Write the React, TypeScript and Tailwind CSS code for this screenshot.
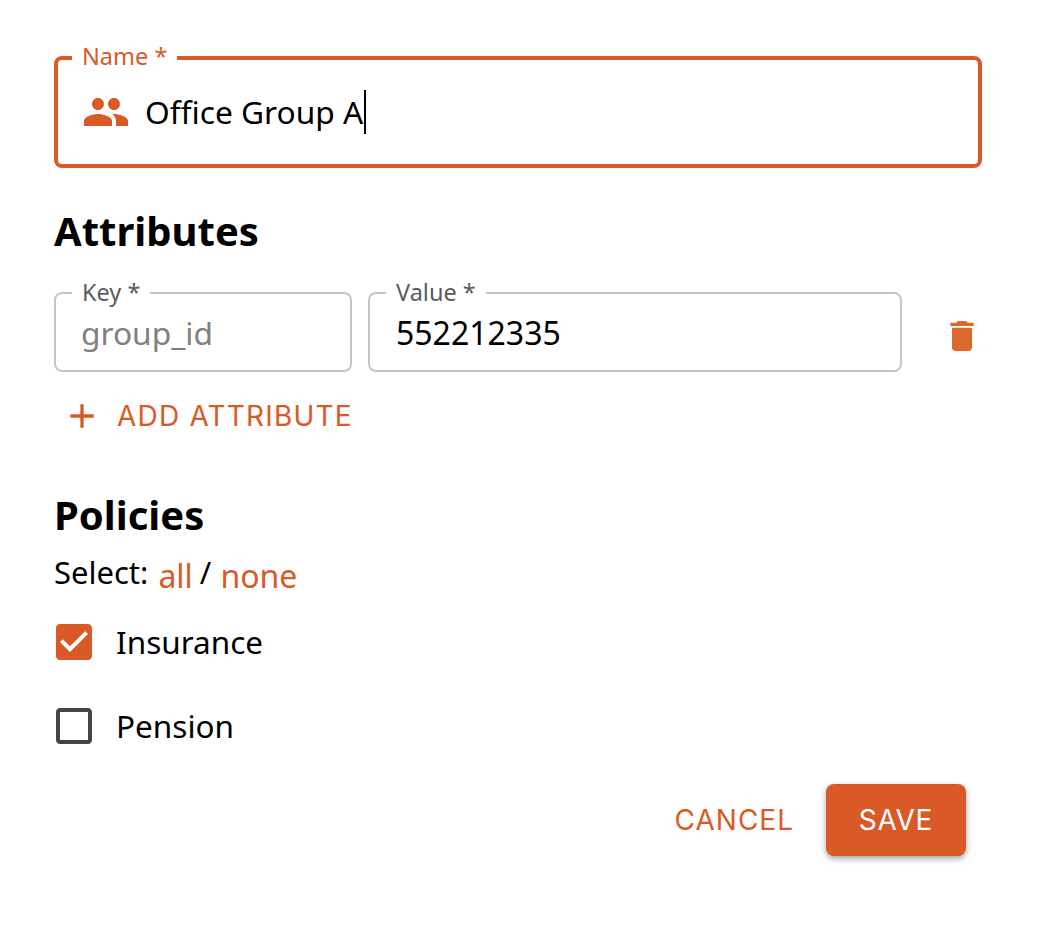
import { FC, ReactNode } from "react";

const ORANGE_TEXT = "text-[#da5a27]";
const BUTTON_FONT = "font-['Inter','Liberation_Sans',sans-serif]";

interface IconProps {
  d: string;
  className: string;
}

const Icon: FC<IconProps> = ({ d, className }) => (
  <svg viewBox="0 0 24 24" fill="currentColor" className={className}>
    <path d={d} />
  </svg>
);

const PEOPLE =
  "M16 11c1.66 0 2.99-1.34 2.99-3S17.66 5 16 5c-1.66 0-3 1.34-3 3s1.34 3 3 3zm-8 0c1.66 0 2.99-1.34 2.99-3S9.66 5 8 5C6.34 5 5 6.34 5 8s1.34 3 3 3zm0 2c-2.33 0-7 1.17-7 3.5V19h14v-2.5c0-2.33-4.67-3.5-7-3.5zm8 0c-.29 0-.62.02-.97.05 1.16.84 1.97 1.97 1.97 3.45V19h6v-2.5c0-2.33-4.67-3.5-7-3.5z";
const TRASH =
  "M6 19c0 1.1.9 2 2 2h8c1.1 0 2-.9 2-2V7H6v12zM19 4h-3.5l-1-1h-5l-1 1H5v2h14V4z";
const PLUS = "M19 13h-6v6h-2v-6H5v-2h6V5h2v6h6v2z";
const CHECKED =
  "M19 3H5c-1.11 0-2 .9-2 2v14c0 1.1.89 2 2 2h14c1.11 0 2-.89 2-2V5c0-1.11-.89-2-2-2zm-9 14l-5-5 1.41-1.41L10 14.17l7.59-7.59L19 8l-9 9z";
const UNCHECKED =
  "M19 5v14H5V5h14m0-2H5c-1.1 0-2 .9-2 2v14c0 1.1.9 2 2 2h14c1.1 0 2-.9 2-2V5c0-1.1-.9-2-2-2z";

interface FieldProps {
  label: string;
  className: string;
  children: ReactNode;
}

const SmallField: FC<FieldProps> = ({ label, className, children }) => (
  <div
    className={`relative flex h-[80px] items-center rounded-lg border-2 border-[#c4c4c4] pl-[26px] pt-[2px] ${className}`}
  >
    <span className="absolute left-[16px] top-[-16px] bg-white px-[10px] text-[23.5px] leading-[28px] text-[#5c5c5c]">
      {label}
    </span>
    {children}
  </div>
);

const Policy: FC<{ name: string; checked?: boolean }> = ({ name, checked }) => (
  <div className="flex h-[84px] items-center">
    <Icon
      d={checked ? CHECKED : UNCHECKED}
      className={`h-[48px] w-[48px] ${checked ? ORANGE_TEXT : "text-[#444444]"}`}
    />
    <span className="ml-[18px] text-[31.5px] leading-[44px] text-black">{name}</span>
  </div>
);

export default function App() {
  return (
    <div className="min-h-[946px] bg-white pl-[54px] pr-[60px] pt-[56px] font-['Noto_Sans','Open_Sans',sans-serif]">
      <div className="relative flex h-[112px] items-center rounded-lg border-4 border-[#da5a27] pl-[24px]">
        <span
          className={`absolute left-[14px] top-[-18px] bg-white px-[10px] text-[23.5px] leading-[28px] ${ORANGE_TEXT}`}
        >
          Name *
        </span>
        <Icon d={PEOPLE} className={`h-[48px] w-[48px] ${ORANGE_TEXT}`} />
        <span className="ml-[15px] text-[31.7px] leading-[44px] text-black">Office Group A</span>
        <span className="ml-[1px] h-[44px] w-[2px] bg-black" />
      </div>

      <h2 className="mt-[38px] text-[40px] font-bold leading-[50px] text-black">Attributes</h2>

      <div className="mt-[36px] flex items-center">
        <SmallField label="Key *" className="w-[298px]">
          <span className="-ml-[1px] text-[31.7px] leading-[44px] text-[#808080]">group_id</span>
        </SmallField>
        <SmallField label="Value *" className="ml-[16px] w-[534px]">
          <span className="text-[32px] leading-[44px] text-black">552212335</span>
        </SmallField>
        <Icon d={TRASH} className="ml-[40px] mt-[8px] h-[40px] w-[40px] text-[#dd682c]" />
      </div>

      <button
        className={`ml-[8px] mt-[24px] flex h-[40px] items-center text-[28px] font-normal leading-[40px] tracking-[1.2px] ${ORANGE_TEXT} ${BUTTON_FONT}`}
      >
        <Icon d={PLUS} className="h-[40px] w-[40px]" />
        <span className="ml-[15px]">ADD ATTRIBUTE</span>
      </button>

      <h2 className="mt-[54px] text-[40px] font-bold leading-[50px] text-black">Policies</h2>

      <div className="mt-[11px] flex text-[31px] leading-[42px] text-black">
        <span>Select:</span>
        <a className={`ml-[10px] mt-[4px] text-[32px] ${ORANGE_TEXT}`}>all</a>
        <span className="ml-[7px]">/</span>
        <a className={`ml-[9px] mt-[4px] text-[32px] ${ORANGE_TEXT}`}>none</a>
      </div>

      <div className="-ml-[4px] mt-[3px]">
        <Policy name="Insurance" checked />
        <Policy name="Pension" />
      </div>

      <div className={`mt-[16px] flex items-center justify-end pr-[16px] ${BUTTON_FONT}`}>
        <button className={`text-[28px] font-normal leading-[40px] tracking-[1px] ${ORANGE_TEXT}`}>
          CANCEL
        </button>
        <button className="ml-[32px] h-[72px] w-[140px] rounded-lg bg-[#da5a27] text-[28px] font-normal leading-[40px] tracking-[0.7px] text-white shadow-[0_3px_6px_rgba(0,0,0,0.35)]">
          SAVE
        </button>
      </div>
    </div>
  );
}
